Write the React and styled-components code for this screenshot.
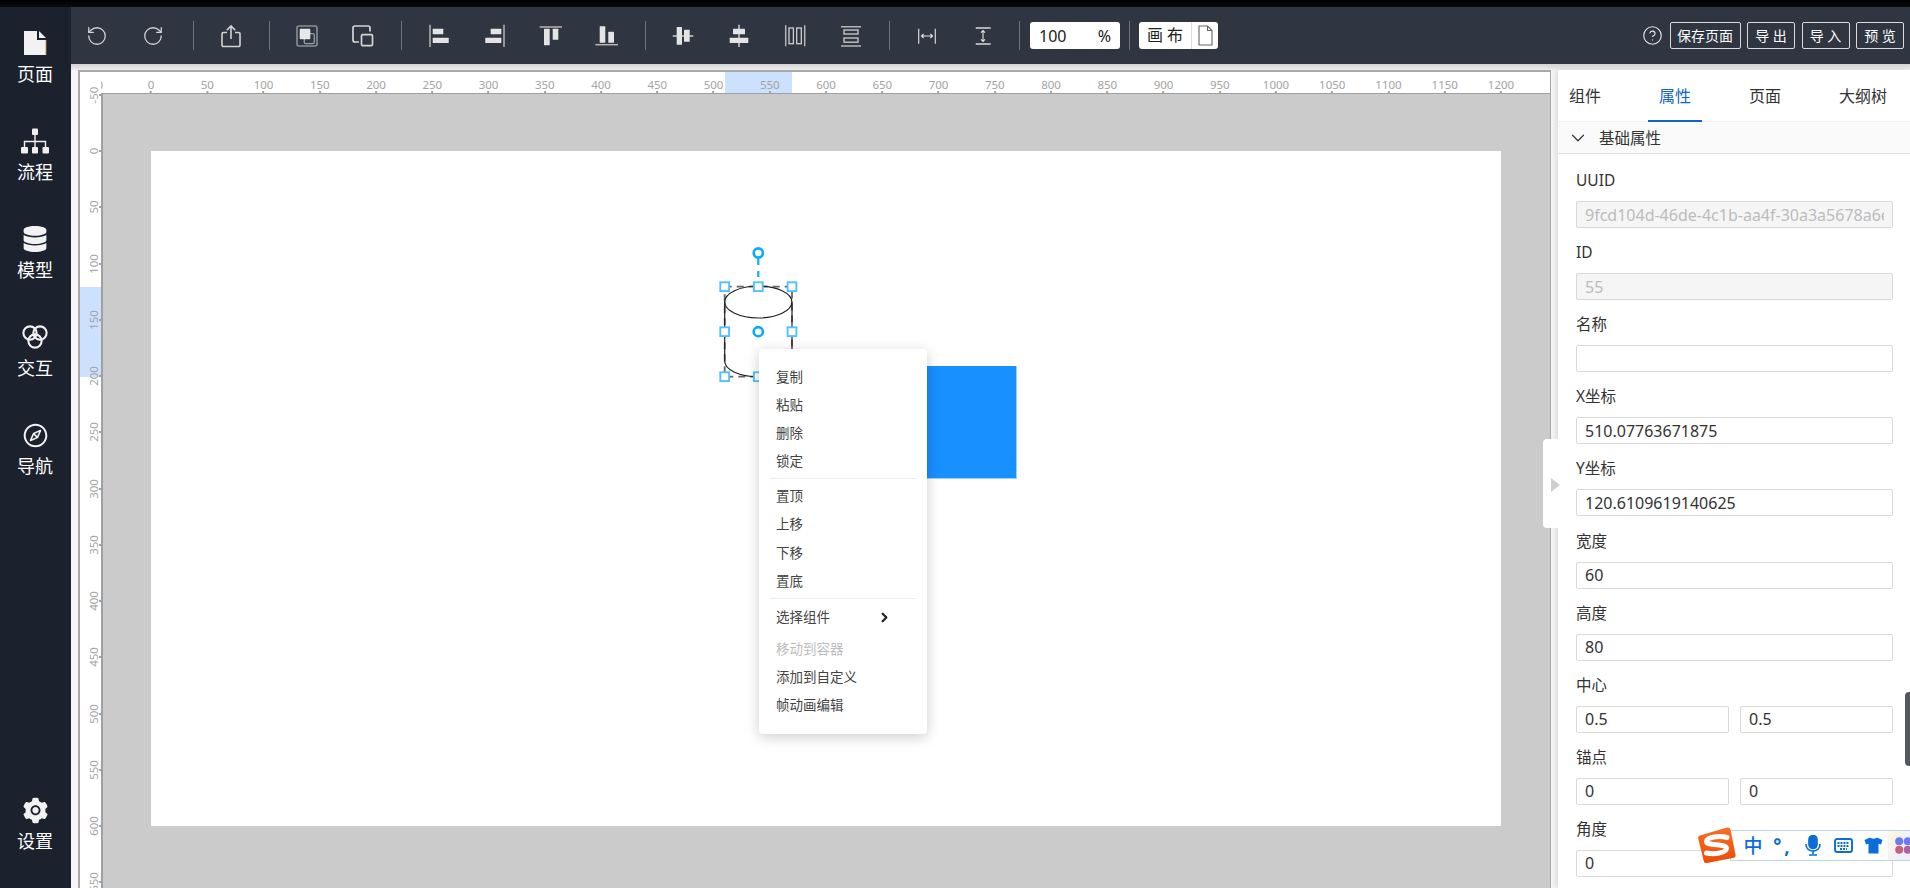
import React from "react";
import styled, { createGlobalStyle } from "styled-components";
import { RotateCcw, RotateCw, CircleHelp, ChevronDown, ChevronRight } from "lucide-react";
import { FaDatabase } from "react-icons/fa";
import { AiFillSetting, AiOutlineCompass } from "react-icons/ai";

const FONT = `"Noto Sans", "Noto Sans CJK SC", sans-serif`;
const SCALE = 1.125;

const GlobalStyle = createGlobalStyle`
  html, body { margin: 0; padding: 0; height: 100%; overflow: hidden; background: #fff; }
  * { box-sizing: border-box; }
  body { font-family: ${FONT}; }
`;

const Page = styled.div`
  position: relative;
  width: 1910px;
  height: 888px;
  overflow: hidden;
  display: flex;
  flex-direction: column;
`;
const TopStrip = styled.div`
  height: 7px;
  flex: none;
  background: linear-gradient(#000, #0c0c0c);
`;
const Main = styled.div`
  flex: 1;
  display: flex;
  min-height: 0;
`;

/* left nav */
const Sidebar = styled.nav`
  width: 71px;
  flex: none;
  background: #1b212d;
  display: flex;
  flex-direction: column;
  padding: 22px 1px 35px 0;
`;
const NavItem = styled.div`
  height: ${(p) => (p.$last ? "57px" : "98px")};
  margin-top: ${(p) => (p.$last ? "auto" : "0")};
  display: flex;
  flex-direction: column;
  align-items: center;
  color: #f2f2f2;
`;
const NavIcon = styled.div`
  height: 28px;
  display: flex;
  align-items: center;
  justify-content: center;
`;
const NavLabel = styled.div`
  margin-top: 5px;
  line-height: 24px;
  font-size: 18px;
  color: #fff;
`;

/* toolbar */
const Content = styled.div`
  flex: 1;
  min-width: 0;
  display: flex;
  flex-direction: column;
`;
const Toolbar = styled.div`
  height: 57px;
  flex: none;
  background: #2f3641;
  display: flex;
  align-items: center;
  gap: 4px;
  padding-right: 6px;
`;
const ToolButton = styled.button`
  width: 52px;
  height: 32px;
  padding: 0;
  border: 0;
  background: transparent;
  display: flex;
  align-items: center;
  justify-content: center;
  color: #d4d4d4;
`;
const ToolSep = styled.div`
  width: ${(p) => p.$w || 16}px;
  margin-left: ${(p) => p.$ml || 0}px;
  height: 29px;
  display: flex;
  justify-content: center;
  &::before {
    content: "";
    width: 1px;
    background: #6f7680;
  }
`;
const ZoomBox = styled.div`
  width: 90px;
  height: 27px;
  background: #fff;
  border-radius: 3px;
  display: flex;
  justify-content: space-between;
  align-items: center;
  padding: 0 9px;
  font-size: 16px;
  color: #222;
`;
const ModeBox = styled.div`
  width: 79px;
  height: 27px;
  background: #fff;
  border-radius: 3px;
  display: flex;
  align-items: center;
  font-size: 16px;
  color: #222;
`;
const ModeText = styled.div`
  width: 53px;
  height: 100%;
  text-align: center;
  line-height: 27px;
  border-right: 1px solid #ddd;
`;
const ModeIcon = styled.div`
  flex: 1;
  display: flex;
  justify-content: center;
`;
const RightTools = styled.div`
  margin-left: auto;
  display: flex;
  align-items: center;
  gap: 6.5px;
`;
const HelpWrap = styled.div`
  display: flex;
  color: #e6e6e6;
`;
const GhostButton = styled.button`
  width: ${(p) => p.$w}px;
  height: 27px;
  padding: 0;
  border: 1px solid #d9d9d9;
  border-radius: 2px;
  background: transparent;
  color: #fff;
  font-family: ${FONT};
  font-size: 14px;
  line-height: 24px;
`;

/* editor */
const Workspace = styled.div`
  flex: 1;
  min-height: 0;
  display: flex;
  padding-top: 6px;
  background: linear-gradient(#d2d2d2, #eeeeee 6px, #f6f6f6 7px);
`;
const EditorFrame = styled.div`
  margin-left: 7px;
  width: 1473px;
  flex: none;
  border-top: 2px solid #a8a8a8;
  border-left: 2px solid #a8a8a8;
  border-right: 1px solid #a8a8a8;
  background: #fff;
  display: grid;
  grid-template-columns: 21px 1fr;
  grid-template-rows: 21px 1fr;
  overflow: hidden;
`;
const HRuler = styled.div`
  position: relative;
  overflow: hidden;
  background: #fff;
  grid-column: 2;
  grid-row: 1;
`;
const VRuler = styled.div`
  position: relative;
  overflow: hidden;
  background: #fff;
  grid-column: 1;
  grid-row: 1 / 3;
`;
const HMark = styled.div.attrs((p) => ({ style: { left: p.$at } }))`
  position: absolute;
  top: 5px;
  transform: translateX(-50%);
  font-size: 11.5px;
  line-height: 15px;
  color: #a3a3a3;
  &::after {
    content: "";
    position: absolute;
    left: 50%;
    top: 14px;
    width: 2px;
    height: 2px;
    margin-left: -1px;
    background: #a3a3a3;
  }
`;
const VMark = styled.div.attrs((p) => ({ style: { top: p.$at } }))`
  position: absolute;
  left: 13px;
  transform: translate(-50%, -50%) rotate(-90deg);
  font-size: 11.5px;
  line-height: 15px;
  color: #a3a3a3;
`;
const VTick = styled.div.attrs((p) => ({ style: { top: p.$at } }))`
  position: absolute;
  right: 0;
  width: 2px;
  height: 2px;
  margin-top: -1px;
  background: #a3a3a3;
`;
const HSelection = styled.div`
  position: absolute;
  left: 623.5px;
  width: 67.5px;
  top: 0;
  bottom: 0;
  background: #cce1fd;
`;
const VSelection = styled.div`
  position: absolute;
  top: 214.5px;
  height: 90px;
  left: 0;
  right: 0;
  background: #cce1fd;
`;
const Viewport = styled.div`
  grid-column: 2;
  grid-row: 2;
  border-top: 1px solid #a0a0a0;
  border-left: 2px solid #a0a0a0;
  background: #cbcbcb;
  padding: 57px 0 0 48px;
  overflow: hidden;
`;
const CanvasSheet = styled.div`
  position: relative;
  width: 1350px;
  height: 675px;
  background: #fff;
`;
const BlueBlock = styled.div`
  position: absolute;
  left: 753px;
  top: 215px;
  width: 113px;
  height: 113px;
  background: #1890ff;
  border-right: 1px solid #9ccfff;
  border-bottom: 1px solid #9ccfff;
`;
const CylinderNode = styled.svg`
  position: absolute;
  left: 555px;
  top: 90px;
`;
const ContextMenu = styled.div`
  position: absolute;
  left: 608px;
  top: 198px;
  width: 168px;
  height: 385px;
  padding: 13.5px 0;
  background: #fff;
  border-radius: 4px;
  box-shadow: 0 3px 14px rgba(0, 0, 0, 0.2);
  font-size: 13.5px;
  color: #444;
`;
const MenuItem = styled.div`
  height: ${(p) => (p.$tall ? "32.7px" : "28.2px")};
  line-height: 28px;
  padding: ${(p) => (p.$tall ? "1.2px" : "0")} 12px 0 17px;
  display: flex;
  justify-content: space-between;
  color: ${(p) => (p.$off ? "#bdbdbd" : "#444")};
`;
const MenuArrow = styled.span`
  display: flex;
  align-items: center;
  height: 28px;
  margin-right: 23px;
  color: #222;
`;
const MenuLine = styled.div`
  height: 1px;
  margin: 3px 11px;
  background: #efefef;
`;

/* right panel */
const SidePanel = styled.aside`
  position: relative;
  margin-left: 7px;
  width: 352px;
  flex: none;
  background: #fff;
  box-shadow: -3px 0 5px rgba(0, 0, 0, 0.09);
`;
const PanelBody = styled.div`
  height: 100%;
  overflow: hidden;
`;
const CollapseHandle = styled.div`
  position: absolute;
  left: -15px;
  top: 369px;
  width: 15px;
  height: 89px;
  background: #fff;
  border-radius: 4px 0 0 4px;
  &::after {
    content: "";
    position: absolute;
    left: 8px;
    top: 39px;
    border-left: 9px solid #cfcfcf;
    border-top: 7.5px solid transparent;
    border-bottom: 7.5px solid transparent;
  }
`;
const ScrollThumb = styled.div`
  position: absolute;
  right: 0;
  top: 622px;
  width: 5px;
  height: 74px;
  background: #55585f;
  border-radius: 4px 0 0 4px;
`;
const Tabs = styled.div`
  height: 52px;
  display: flex;
  gap: 36px;
  border-bottom: 1px solid #f0f0f0;
`;
const Tab = styled.div`
  position: relative;
  padding: 0 11px;
  min-width: 54px;
  font-size: 16px;
  line-height: 52px;
  color: ${(p) => (p.$active ? "#1565c0" : "#333")};
  &::after {
    content: "";
    display: ${(p) => (p.$active ? "block" : "none")};
    position: absolute;
    left: 0;
    right: 0;
    bottom: -1px;
    height: 2px;
    background: #1565c0;
  }
`;
const SectionHead = styled.div`
  height: 32px;
  display: flex;
  align-items: center;
  gap: 10px;
  padding-left: 9px;
  background: #fafafa;
  border-bottom: 1px solid #ddd;
  font-size: 15.5px;
  color: #333;
`;
const Form = styled.div`
  padding: 12px 17px 0 18px;
`;
const Field = styled.div`
  margin-bottom: 10.12px;
`;
const FieldLabel = styled.div`
  height: 27px;
  line-height: 28.5px;
  margin-bottom: 8px;
  font-size: 15.5px;
  color: #333;
`;
const FieldRow = styled.div`
  display: flex;
  gap: 11px;
`;
const TextInput = styled.input`
  display: block;
  width: 100%;
  min-width: 0;
  height: 27px;
  padding: 0 8px;
  border: 1px solid #d9d9d9;
  border-radius: 2px;
  outline: 0;
  font-family: ${FONT};
  font-size: 16px;
  color: #333;
  background: #fff;
  &:disabled {
    background: #f5f5f5;
    color: #bcbcbc;
  }
`;

/* IME bar that floats over the page */
const ImeDock = styled.div`
  position: absolute;
  left: 1697px;
  top: 826px;
  width: 213px;
  height: 39px;
  display: flex;
  align-items: center;
`;
const ImeLogo = styled.svg`
  position: relative;
  z-index: 1;
  flex: none;
`;
const ImeBar = styled.div`
  flex: 1;
  height: 31px;
  margin-left: -7px;
  padding-left: 7px;
  display: flex;
  align-items: center;
  background: #fff;
  border: 1px solid #bed4ea;
  border-right: 0;
  color: #0a6ed6;
`;
const ImeCell = styled.div`
  width: 30px;
  flex: none;
  display: flex;
  justify-content: center;
  align-items: center;
  font-size: 19px;
  font-weight: ${(p) => (p.$bold ? 700 : 500)};
  letter-spacing: ${(p) => (p.$bold ? "3px" : "0")};
  line-height: 28px;
`;
const ImeSkin = styled(ImeCell)`
  height: 29px;
  background: linear-gradient(120deg, #fdf7d8, #eef0ff 55%, #fbe6f5);
`;

const G = ({ children }) => (
  <svg width="32" height="32" viewBox="0 0 32 32" fill="none" stroke="currentColor" strokeWidth="1.3">
    {children}
  </svg>
);
const Bar = ({ x, y, w, h }) => <rect x={x} y={y} width={w} height={h} fill="#e4e4e4" stroke="none" rx="0.5" />;

const ShareIcon = () => (
  <G>
    <path d="M12 12.5H8.5a1.5 1.5 0 0 0-1.5 1.5v11a1.5 1.5 0 0 0 1.5 1.5h15a1.5 1.5 0 0 0 1.5-1.5V14a1.5 1.5 0 0 0-1.5-1.5H20" strokeWidth="1.6" />
    <path d="M16 19V6M11.8 10.2L16 6l4.2 4.2" strokeWidth="1.6" />
  </G>
);
const LayerIcon = () => (
  <G>
    <rect x="6" y="6" width="20" height="20" rx="2" stroke="#8a9099" strokeWidth="1.6" />
    <rect x="13.3" y="13.7" width="10" height="10" rx="1.5" stroke="#9aa0a8" strokeWidth="1.3" />
    <rect x="8.7" y="8.7" width="10.6" height="10.6" rx="1" fill="#e8e8e8" stroke="none" />
  </G>
);
const CopyIcon = () => (
  <G>
    <path d="M12 22H8a2 2 0 0 1-2-2V8a2 2 0 0 1 2-2h13a2 2 0 0 1 2 2v3.5" strokeWidth="1.7" />
    <rect x="14.5" y="14.7" width="11" height="11" rx="1.2" strokeWidth="1.7" />
  </G>
);
const AlignLeftIcon = () => (
  <G>
    <path d="M7 4.7V27" stroke="#b5b5b5" strokeWidth="1.5" />
    <Bar x="9.7" y="8.7" w="10.6" h="5.6" />
    <Bar x="9.7" y="17.7" w="16" h="5.4" />
  </G>
);
const AlignRightIcon = () => (
  <G>
    <path d="M25 4.7V27" stroke="#b5b5b5" strokeWidth="1.5" />
    <Bar x="11.7" y="8.7" w="10.6" h="5.6" />
    <Bar x="6.3" y="17.7" w="16" h="5.4" />
  </G>
);
const AlignTopIcon = () => (
  <G>
    <path d="M4.7 7H27" stroke="#b5b5b5" strokeWidth="1.5" />
    <Bar x="9" y="8.7" w="5.7" h="16.6" />
    <Bar x="17.7" y="8.7" w="5.6" h="11" />
  </G>
);
const AlignBottomIcon = () => (
  <G>
    <path d="M4.3 24.7H27" stroke="#b5b5b5" strokeWidth="1.5" />
    <Bar x="8.7" y="6.3" w="5.6" h="16.4" />
    <Bar x="17.3" y="11.7" w="5.7" h="11" />
  </G>
);
const CenterVIcon = () => (
  <G>
    <path d="M5.7 16H26.3" stroke="#e4e4e4" strokeWidth="1.3" />
    <Bar x="9.7" y="7" w="5.3" h="17.7" />
    <Bar x="17" y="9.7" w="5.7" h="12" />
  </G>
);
const CenterHIcon = () => (
  <G>
    <path d="M16 4.7V27" stroke="#e4e4e4" strokeWidth="1.3" />
    <Bar x="10" y="8.7" w="12" h="5.6" />
    <Bar x="6.7" y="17.7" w="18.6" h="5.4" />
  </G>
);
const DistHIcon = () => (
  <G>
    <path d="M6.7 5.3v21M25.7 5.3v21" stroke="#b5b5b5" strokeWidth="1.5" />
    <rect x="10" y="8" width="4.4" height="15.7" stroke="#cfcfcf" />
    <rect x="17.7" y="8" width="4.6" height="15.7" stroke="#cfcfcf" />
  </G>
);
const DistVIcon = () => (
  <G>
    <path d="M6 6.7h20M6 26h20" stroke="#b5b5b5" strokeWidth="1.5" />
    <rect x="9" y="10" width="14" height="4" stroke="#cfcfcf" />
    <rect x="9" y="18" width="14" height="4.2" stroke="#cfcfcf" />
  </G>
);
const WidthIcon = () => (
  <G>
    <path d="M7.7 8.7v15M24.3 8.7v15" stroke="#d8d8d8" strokeWidth="1.2" />
    <path d="M10.5 16h11M12.6 14l-2.1 2 2.1 2M19.4 14l2.1 2-2.1 2" stroke="#e4e4e4" strokeWidth="1.1" />
  </G>
);
const HeightIcon = () => (
  <G>
    <path d="M8.7 8h15M8.7 24h15" stroke="#d8d8d8" strokeWidth="1.5" />
    <path d="M16 10.5v11M14 12.6l2-2.1 2 2.1M14 19.4l2 2.1 2-2.1" stroke="#e4e4e4" strokeWidth="1.1" />
  </G>
);
const PageGlyph = () => (
  <svg width="26" height="28" viewBox="0 0 26 28">
    <path d="M2 2h13v9h9v15H2z" fill="#f2f2f2" />
    <path d="M17 2l7 7h-7z" fill="#f2f2f2" />
    <path d="M24 11v15" stroke="#c98a3a" strokeWidth="0.8" />
  </svg>
);
const FlowGlyph = () => (
  <svg width="30" height="26" viewBox="0 0 30 26" fill="#efefef">
    <path d="M15 6v13M4.500 19v-5.500h21V19M15 13.500" fill="none" stroke="#efefef" strokeWidth="1.4" />
    <rect x="12" y="0.500" width="6" height="6.500" rx="1" />
    <rect x="1" y="19" width="7" height="6.500" rx="1" />
    <rect x="12" y="19" width="6" height="6.500" rx="1" />
    <rect x="22.500" y="19" width="6.500" height="6.500" rx="1" />
  </svg>
);
const BlendGlyph = () => (
  <svg width="28" height="26" viewBox="0 0 28 26" fill="none" stroke="#f0f0f0" strokeWidth="2.1">
    <circle cx="9" cy="9" r="6.6" />
    <circle cx="19" cy="9" r="6.6" />
    <circle cx="14" cy="17" r="6.6" />
  </svg>
);
const SmallPage = () => (
  <svg width="15" height="21" viewBox="0 0 15 21" fill="none" stroke="#666" strokeWidth="1.1">
    <path d="M1 1h8.5L14 5.5V20H1zM9.5 1v4.5H14" />
  </svg>
);
const CylinderSvg = () => {
  const handles = [
    [18.7, 45.7], [52.3, 45.7], [86, 45.7],
    [18.7, 90.7], [86, 90.7],
    [18.7, 135.7], [52.3, 135.7], [86, 135.7],
  ];
  return (
    <CylinderNode width="110" height="150" viewBox="0 0 110 150" fill="none">
      <rect x="18.7" y="45.7" width="67.3" height="90" stroke="#666" strokeWidth="1.8" strokeDasharray="7 5" />
      <ellipse cx="52.3" cy="61" rx="33.6" ry="16" stroke="#222" strokeWidth="1.2" />
      <path d="M18.7 61v59c0 9 15 15.7 33.6 15.7S86 129 86 120V61" stroke="#222" strokeWidth="1.2" />
      <path d="M52.3 18v26" stroke="#12aaff" strokeWidth="2.2" strokeDasharray="6 6" />
      <circle cx="52.3" cy="12" r="4.6" stroke="#0aaaff" strokeWidth="2.6" fill="#fff" />
      <circle cx="52.3" cy="90.7" r="4.6" stroke="#0aaaff" strokeWidth="2.6" fill="#fff" />
      {handles.map(([x, y]) => (
        <rect key={`${x}-${y}`} x={x - 4.4} y={y - 4.4} width="8.8" height="8.8" fill="#fff" stroke="#52c0ff" strokeWidth="1.9" />
      ))}
    </CylinderNode>
  );
};

const hValues = Array.from({ length: 26 }, (_, i) => -50 + i * 50);
const vValues = Array.from({ length: 15 }, (_, i) => -50 + i * 50);

const navItems = [
  ["页面", <PageGlyph />],
  ["流程", <FlowGlyph />],
  ["模型", <FaDatabase size={26} />],
  ["交互", <BlendGlyph />],
  ["导航", <AiOutlineCompass size={27} />],
];

const Input = ({ value, disabled }) => <TextInput readOnly disabled={disabled} value={value} />;

const fields = [
  ["UUID", "9fcd104d-46de-4c1b-aa4f-30a3a5678a6e", true],
  ["ID", "55", true],
  ["名称", ""],
  ["X坐标", "510.07763671875"],
  ["Y坐标", "120.6109619140625"],
  ["宽度", "60"],
  ["高度", "80"],
];

export default function App() {
  return (
    <Page>
      <GlobalStyle />
      <TopStrip />
      <Main>
        <Sidebar>
          {navItems.map(([label, icon]) => (
            <NavItem key={label}>
              <NavIcon>{icon}</NavIcon>
              <NavLabel>{label}</NavLabel>
            </NavItem>
          ))}
          <NavItem $last>
            <NavIcon><AiFillSetting size={29} /></NavIcon>
            <NavLabel>设置</NavLabel>
          </NavItem>
        </Sidebar>
        <Content>
          <Toolbar>
            <ToolButton><RotateCcw size={22} strokeWidth={1.4} /></ToolButton>
            <ToolButton><RotateCw size={22} strokeWidth={1.4} /></ToolButton>
            <ToolSep $ml={2} />
            <ToolButton><ShareIcon /></ToolButton>
            <ToolSep />
            <ToolButton><LayerIcon /></ToolButton>
            <ToolButton><CopyIcon /></ToolButton>
            <ToolSep />
            <ToolButton><AlignLeftIcon /></ToolButton>
            <ToolButton><AlignRightIcon /></ToolButton>
            <ToolButton><AlignTopIcon /></ToolButton>
            <ToolButton><AlignBottomIcon /></ToolButton>
            <ToolSep />
            <ToolButton><CenterVIcon /></ToolButton>
            <ToolButton><CenterHIcon /></ToolButton>
            <ToolButton><DistHIcon /></ToolButton>
            <ToolButton><DistVIcon /></ToolButton>
            <ToolSep />
            <ToolButton><WidthIcon /></ToolButton>
            <ToolButton><HeightIcon /></ToolButton>
            <ToolSep $w={13} />
            <ZoomBox><span>100</span><span>%</span></ZoomBox>
            <ToolSep $w={11} />
            <ModeBox>
              <ModeText>画 布</ModeText>
              <ModeIcon><SmallPage /></ModeIcon>
            </ModeBox>
            <RightTools>
              <HelpWrap><CircleHelp size={21} strokeWidth={1.3} /></HelpWrap>
              <GhostButton $w={71}>保存页面</GhostButton>
              <GhostButton $w={48}>导 出</GhostButton>
              <GhostButton $w={48}>导 入</GhostButton>
              <GhostButton $w={48}>预 览</GhostButton>
            </RightTools>
          </Toolbar>
          <Workspace>
            <EditorFrame>
              <HRuler>
                <HSelection />
                {hValues.map((v) => (
                  <HMark key={v} $at={50 + v * SCALE}>{v}</HMark>
                ))}
              </HRuler>
              <VRuler>
                <VSelection />
                {vValues.map((v) => (
                  <React.Fragment key={v}>
                    <VMark $at={79 + v * SCALE}>{v}</VMark>
                    <VTick $at={79 + v * SCALE} />
                  </React.Fragment>
                ))}
              </VRuler>
              <Viewport>
                <CanvasSheet>
                  <BlueBlock />
                  <CylinderSvg />
                  <ContextMenu>
                    <MenuItem>复制</MenuItem>
                    <MenuItem>粘贴</MenuItem>
                    <MenuItem>删除</MenuItem>
                    <MenuItem>锁定</MenuItem>
                    <MenuLine />
                    <MenuItem>置顶</MenuItem>
                    <MenuItem>上移</MenuItem>
                    <MenuItem>下移</MenuItem>
                    <MenuItem>置底</MenuItem>
                    <MenuLine />
                    <MenuItem $tall>
                      选择组件
                      <MenuArrow><ChevronRight size={15} strokeWidth={3.6} /></MenuArrow>
                    </MenuItem>
                    <MenuItem $off>移动到容器</MenuItem>
                    <MenuItem>添加到自定义</MenuItem>
                    <MenuItem>帧动画编辑</MenuItem>
                  </ContextMenu>
                </CanvasSheet>
              </Viewport>
            </EditorFrame>
            <SidePanel>
              <CollapseHandle />
              <ScrollThumb />
              <PanelBody>
                <Tabs>
                  <Tab>组件</Tab>
                  <Tab $active>属性</Tab>
                  <Tab>页面</Tab>
                  <Tab>大纲树</Tab>
                </Tabs>
                <SectionHead>
                  <ChevronDown size={22} strokeWidth={1.3} />
                  基础属性
                </SectionHead>
                <Form>
                  {fields.map(([label, value, disabled]) => (
                    <Field key={label}>
                      <FieldLabel>{label}</FieldLabel>
                      <Input value={value} disabled={disabled} />
                    </Field>
                  ))}
                  <Field>
                    <FieldLabel>中心</FieldLabel>
                    <FieldRow>
                      <Input value="0.5" />
                      <Input value="0.5" />
                    </FieldRow>
                  </Field>
                  <Field>
                    <FieldLabel>锚点</FieldLabel>
                    <FieldRow>
                      <Input value="0" />
                      <Input value="0" />
                    </FieldRow>
                  </Field>
                  <Field>
                    <FieldLabel>角度</FieldLabel>
                    <Input value="0" />
                  </Field>
                </Form>
              </PanelBody>
            </SidePanel>
          </Workspace>
        </Content>
      </Main>
      <ImeDock>
        <ImeLogo width="40" height="39" viewBox="0 0 40 39">
          <defs>
            <linearGradient id="imeOrange" x1="0" y1="0" x2="0" y2="1">
              <stop offset="0" stopColor="#f96f25" />
              <stop offset="1" stopColor="#ee4a08" />
            </linearGradient>
          </defs>
          <path d="M3 9.500L30 1.500c1.500-.4 3 .3 3.400 1.800l5.200 25.400c.3 1.500-.4 2.600-1.800 3L10 37c-1.500.4-2.800-.3-3.200-1.800L1.200 12.600c-.3-1.400.4-2.600 1.800-3.100z" fill="url(#imeOrange)" />
          <path d="M30 11.500C22 9.500 10 11 9.500 15.500 9 20 29 17.500 29.500 22 30 26.500 18 29 9.500 27" fill="none" stroke="#fff" strokeWidth="5" strokeLinecap="round" />
        </ImeLogo>
        <ImeBar>
          <ImeCell>中</ImeCell>
          <ImeCell $bold>°,</ImeCell>
          <ImeCell>
            <svg width="16" height="21" viewBox="0 0 16 21" fill="none" stroke="currentColor" strokeWidth="1.700">
              <rect x="4" y="0.500" width="8" height="13" rx="4" fill="currentColor" />
              <path d="M1 9c0 4.500 3 7 7 7s7-2.500 7-7M8 16v3M4 20h8" />
            </svg>
          </ImeCell>
          <ImeCell>
            <svg width="19" height="15" viewBox="0 0 19 15" fill="none" stroke="currentColor" strokeWidth="1.900">
              <rect x="1" y="1" width="17" height="13" rx="2" />
              <path d="M3.500 5h12M3.500 8h12M6 11h7" strokeDasharray="2 1" strokeWidth="1.800" />
            </svg>
          </ImeCell>
          <ImeCell>
            <svg width="19" height="17" viewBox="0 0 19 17" fill="currentColor">
              <path d="M6 0.500C7 2 12 2 13 0.500L18.500 3 17 7.500l-2.500-.7V16.500H4.500V6.800L2 7.500 0.500 3z" />
            </svg>
          </ImeCell>
          <ImeSkin>
            <svg width="17" height="17" viewBox="0 0 17 17">
              <circle cx="4.200" cy="4.200" r="4" fill="#6f78ee" />
              <circle cx="12.800" cy="4.200" r="4" fill="#6f78ee" />
              <circle cx="4.200" cy="12.800" r="4" fill="#c9607e" />
              <circle cx="12.800" cy="12.800" r="4" fill="#a9639f" />
            </svg>
          </ImeSkin>
        </ImeBar>
      </ImeDock>
    </Page>
  );
}
